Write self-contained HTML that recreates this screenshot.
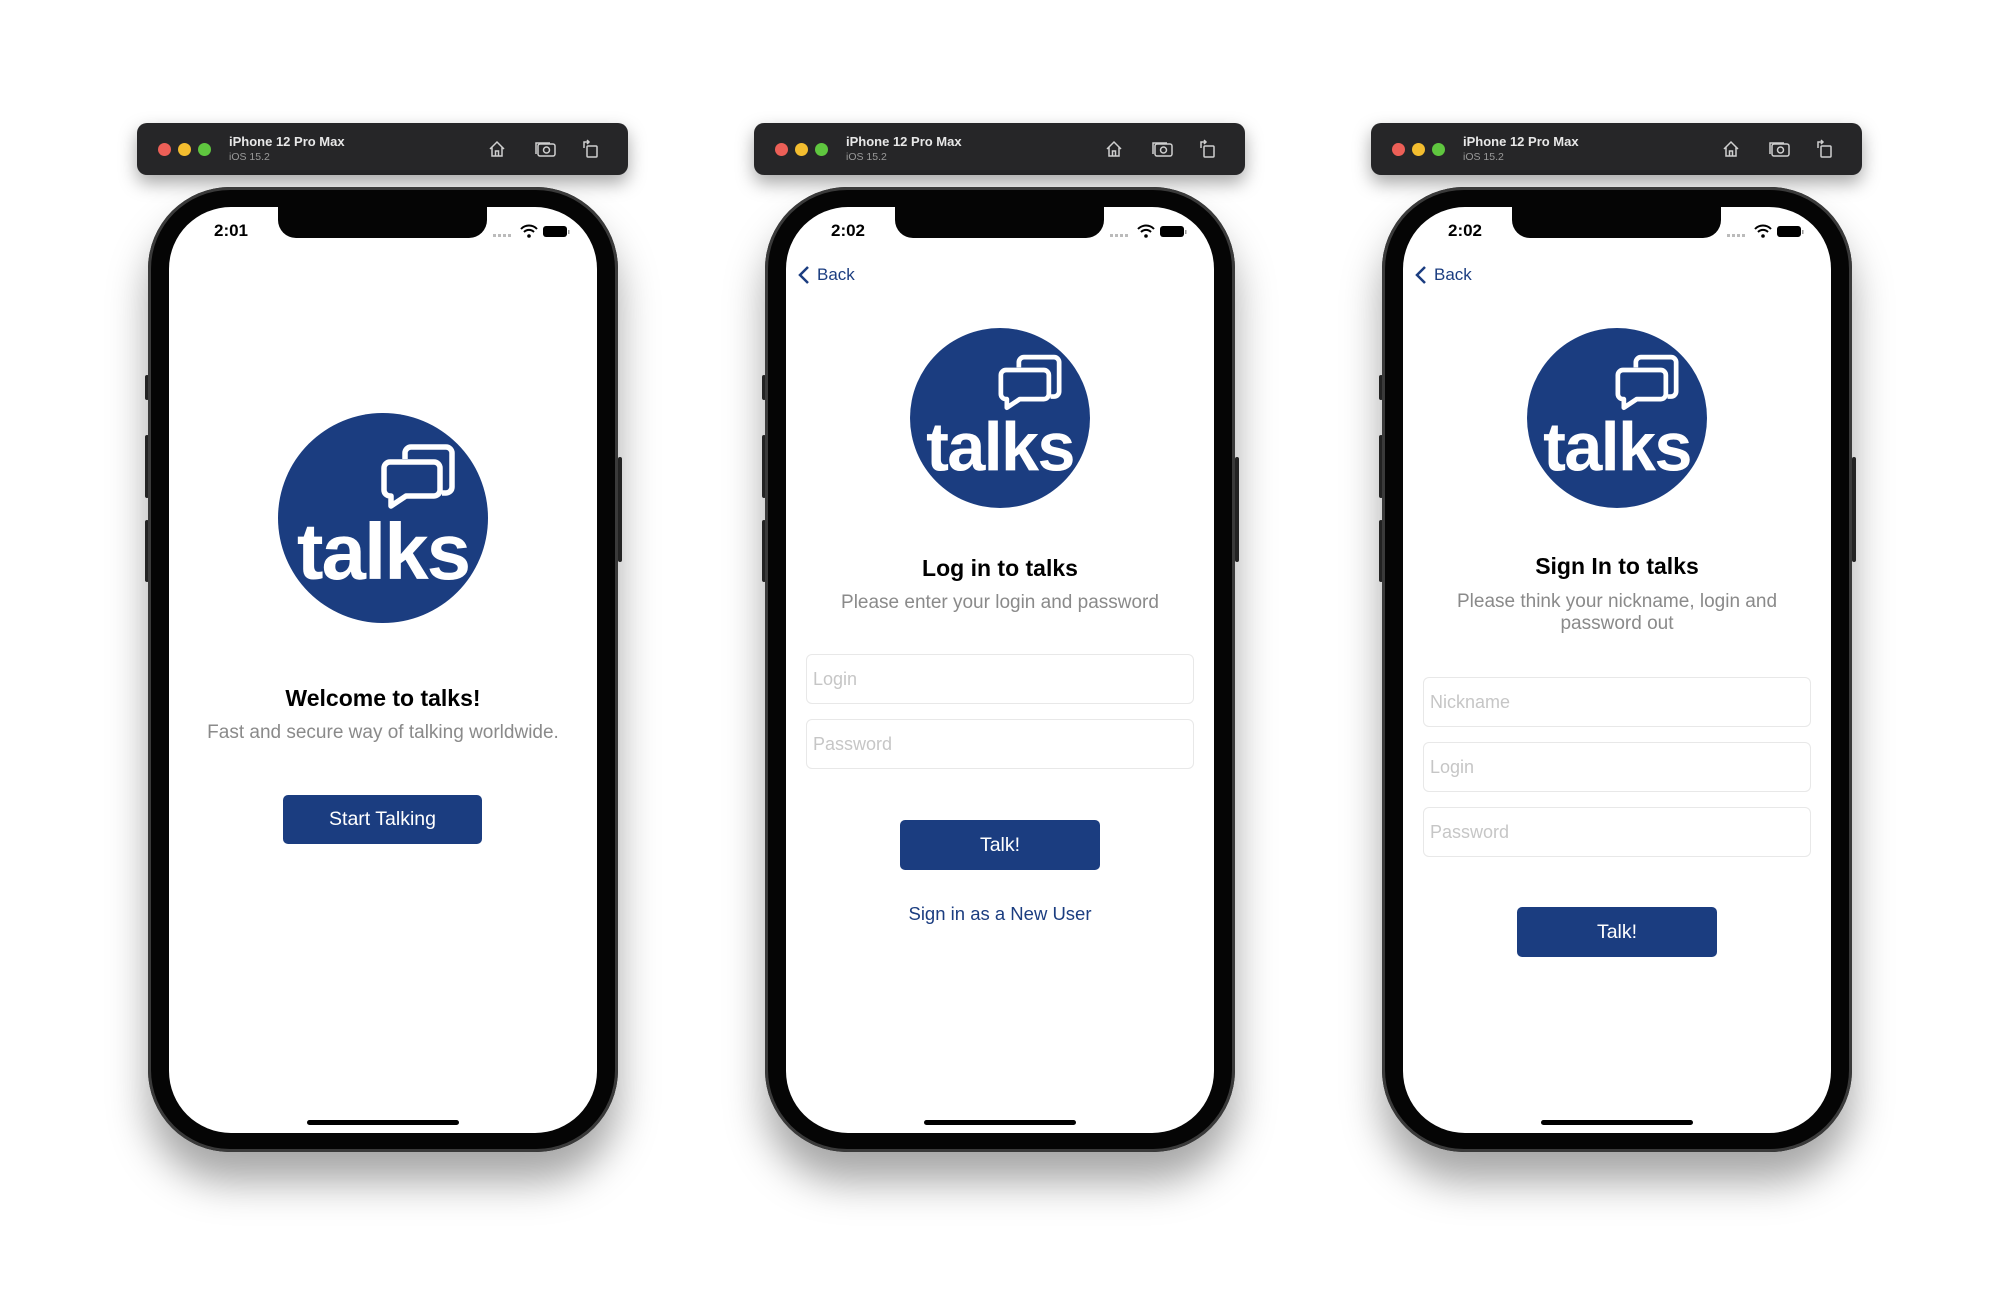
<!DOCTYPE html>
<html><head><meta charset="utf-8"><style>
*{box-sizing:border-box;margin:0;padding:0}
body{width:2000px;height:1315px;background:#fff;position:relative;overflow:hidden;font-family:"Liberation Sans",sans-serif}
.ph{position:absolute;top:0;width:492px;height:1200px}
.tb{position:absolute;left:0;top:123px;width:491px;height:52px;background:#262628;border-radius:10px;box-shadow:0 8px 18px rgba(0,0,0,.35)}
.dot{position:absolute;top:20px;width:13px;height:13px;border-radius:50%}
.tt{position:absolute;left:92px;top:11px;color:#e8e8e8;font-weight:bold;font-size:13px}
.ts{position:absolute;left:92px;top:28px;color:#9a9a9a;font-size:10.5px}
.frame{position:absolute;left:11px;top:187px;width:470px;height:965px;background:#050505;border-radius:82px;box-shadow:0 30px 40px rgba(0,0,0,.35),inset 0 0 0 3px #3a3a3a}
.btn-side{position:absolute;width:4px;background:#2a2a2a;border-radius:2px}
.screen{position:absolute;left:32px;top:207px;width:428px;height:926px;background:#fff;border-radius:62px;overflow:hidden}
.notch{position:absolute;left:109px;top:0;width:209px;height:31px;background:#050505;border-radius:0 0 18px 18px}
.time{position:absolute;left:30px;top:14px;width:64px;text-align:center;font-weight:bold;font-size:17px;color:#000}
.home{position:absolute;left:138px;top:913px;width:152px;height:5px;background:#000;border-radius:3px}
.c{position:absolute;left:0;width:428px;text-align:center}
.h1{font-weight:bold;font-size:23px;color:#000}
.sub{font-size:19px;color:#8a8a8a;line-height:22px}
.b{position:absolute;background:#1b3d80;color:#fff;font-size:19.5px;border-radius:5px;display:flex;align-items:center;justify-content:center}
.in{position:absolute;left:20px;width:388px;height:50px;border:1px solid #e8e8e8;border-radius:6px;font-size:18px;color:#c6c6c6;padding:14px 0 0 6px}
.back{position:absolute;left:12px;top:58px;color:#1b3d80;font-size:17px;display:flex;align-items:center;gap:7px}
</style></head><body>

<svg width="0" height="0" style="position:absolute">
<defs>
<symbol id="logo" viewBox="0 0 210 210">
<circle cx="105" cy="105" r="105" fill="#1b3d80"/>
<path d="M127 46 V40 a6 6 0 0 1 6-6 H168 a6 6 0 0 1 6 6 V74 a6 6 0 0 1 -6 6 H164" fill="none" stroke="#fff" stroke-width="5.5"/>
<path d="M112 49 H156 a6 6 0 0 1 6 6 V77 a6 6 0 0 1 -6 6 H128 L113 93 V83 H112 a6 6 0 0 1 -6 -6 V55 a6 6 0 0 1 6-6 Z" fill="#1b3d80" stroke="#fff" stroke-width="5.5" stroke-linejoin="round"/>
<text x="105" y="166" text-anchor="middle" font-family="Liberation Sans, sans-serif" font-weight="bold" font-size="80" letter-spacing="-2" fill="#fff">talks</text>
</symbol>
<symbol id="stat" viewBox="0 0 90 16">
<g fill="#bbb"><rect x="0" y="10" width="3" height="3"/><rect x="5" y="10" width="3" height="3"/><rect x="10" y="10" width="3" height="3"/><rect x="15" y="10" width="3" height="3"/></g>
<path d="M28 5 a11 11 0 0 1 16 0 M31 8 a7 7 0 0 1 10 0" fill="none" stroke="#000" stroke-width="2"/>
<circle cx="36" cy="12" r="1.8" fill="#000"/>
<rect x="50" y="2" width="24" height="11" rx="3" fill="#000"/>
<rect x="75" y="6" width="1.5" height="4" fill="#999"/>
</symbol>
<symbol id="tbicons" viewBox="0 0 120 20">
<g fill="none" stroke="#cfcfcf" stroke-width="1.5">
<path d="M3 10 L10 3 L17 10 M5 8 V17 H15 V8 M8.5 17 V12 H11.5 V17"/>
<rect x="51" y="5" width="17" height="12" rx="2"/><path d="M49 15 V4 H63"/><circle cx="59.5" cy="11" r="3"/>
<rect x="100" y="7" width="10" height="11" rx="1"/><path d="M97 9 V3 H102 M100 1 L102 3 L100 5"/>
</g>
</symbol>
</defs></svg>

<div class="ph" style="left:137px">
 <div class="tb"><div class="dot" style="left:21px;background:#ec5f57"></div><div class="dot" style="left:41px;background:#f3bd2f"></div><div class="dot" style="left:61px;background:#5fc63f"></div>
 <div class="tt">iPhone 12 Pro Max</div><div class="ts">iOS 15.2</div>
 <svg style="position:absolute;left:350px;top:16px" width="120" height="20"><use href="#tbicons"/></svg></div>
 <div class="btn-side" style="left:8px;top:375px;height:25px"></div><div class="btn-side" style="left:8px;top:435px;height:63px"></div><div class="btn-side" style="left:8px;top:520px;height:62px"></div><div class="btn-side" style="left:481px;top:457px;height:105px"></div>
 <div class="frame"></div>
 <div class="screen">
  <div class="notch"></div><div class="time">2:01</div>
  <svg style="position:absolute;left:324px;top:17px" width="90" height="16"><use href="#stat"/></svg>
  <svg style="position:absolute;left:109px;top:206px" width="210" height="210"><use href="#logo"/></svg>
  <div class="c h1" style="top:478px">Welcome to talks!</div>
  <div class="c sub" style="top:515px">Fast and secure way of talking worldwide.</div>
  <div class="b" style="left:114px;top:588px;width:199px;height:49px">Start Talking</div>
  <div class="home"></div>
 </div>
</div>

<div class="ph" style="left:754px">
 <div class="tb"><div class="dot" style="left:21px;background:#ec5f57"></div><div class="dot" style="left:41px;background:#f3bd2f"></div><div class="dot" style="left:61px;background:#5fc63f"></div>
 <div class="tt">iPhone 12 Pro Max</div><div class="ts">iOS 15.2</div>
 <svg style="position:absolute;left:350px;top:16px" width="120" height="20"><use href="#tbicons"/></svg></div>
 <div class="btn-side" style="left:8px;top:375px;height:25px"></div><div class="btn-side" style="left:8px;top:435px;height:63px"></div><div class="btn-side" style="left:8px;top:520px;height:62px"></div><div class="btn-side" style="left:481px;top:457px;height:105px"></div>
 <div class="frame"></div>
 <div class="screen">
  <div class="notch"></div><div class="time">2:02</div>
  <svg style="position:absolute;left:324px;top:17px" width="90" height="16"><use href="#stat"/></svg>
  <div class="back"><svg width="12" height="20"><path d="M10 2 L2 10 L10 18" fill="none" stroke="#1b3d80" stroke-width="2.5"/></svg>Back</div>
  <svg style="position:absolute;left:124px;top:121px" width="180" height="180"><use href="#logo"/></svg>
  <div class="c h1" style="top:348px">Log in to talks</div>
  <div class="c sub" style="top:385px">Please enter your login and password</div>
  <div class="in" style="top:447px">Login</div>
  <div class="in" style="top:512px">Password</div>
  <div class="b" style="left:114px;top:613px;width:200px;height:50px">Talk!</div>
  <div class="c" style="top:696px;font-size:18.5px;color:#1b3d80">Sign in as a New User</div>
  <div class="home"></div>
 </div>
</div>

<div class="ph" style="left:1371px">
 <div class="tb"><div class="dot" style="left:21px;background:#ec5f57"></div><div class="dot" style="left:41px;background:#f3bd2f"></div><div class="dot" style="left:61px;background:#5fc63f"></div>
 <div class="tt">iPhone 12 Pro Max</div><div class="ts">iOS 15.2</div>
 <svg style="position:absolute;left:350px;top:16px" width="120" height="20"><use href="#tbicons"/></svg></div>
 <div class="btn-side" style="left:8px;top:375px;height:25px"></div><div class="btn-side" style="left:8px;top:435px;height:63px"></div><div class="btn-side" style="left:8px;top:520px;height:62px"></div><div class="btn-side" style="left:481px;top:457px;height:105px"></div>
 <div class="frame"></div>
 <div class="screen">
  <div class="notch"></div><div class="time">2:02</div>
  <svg style="position:absolute;left:324px;top:17px" width="90" height="16"><use href="#stat"/></svg>
  <div class="back"><svg width="12" height="20"><path d="M10 2 L2 10 L10 18" fill="none" stroke="#1b3d80" stroke-width="2.5"/></svg>Back</div>
  <svg style="position:absolute;left:124px;top:121px" width="180" height="180"><use href="#logo"/></svg>
  <div class="c h1" style="top:346px">Sign In to talks</div>
  <div class="c sub" style="top:384px">Please think your nickname, login and<br>password out</div>
  <div class="in" style="top:470px">Nickname</div>
  <div class="in" style="top:535px">Login</div>
  <div class="in" style="top:600px">Password</div>
  <div class="b" style="left:114px;top:700px;width:200px;height:50px">Talk!</div>
  <div class="home"></div>
 </div>
</div>
</body></html>
